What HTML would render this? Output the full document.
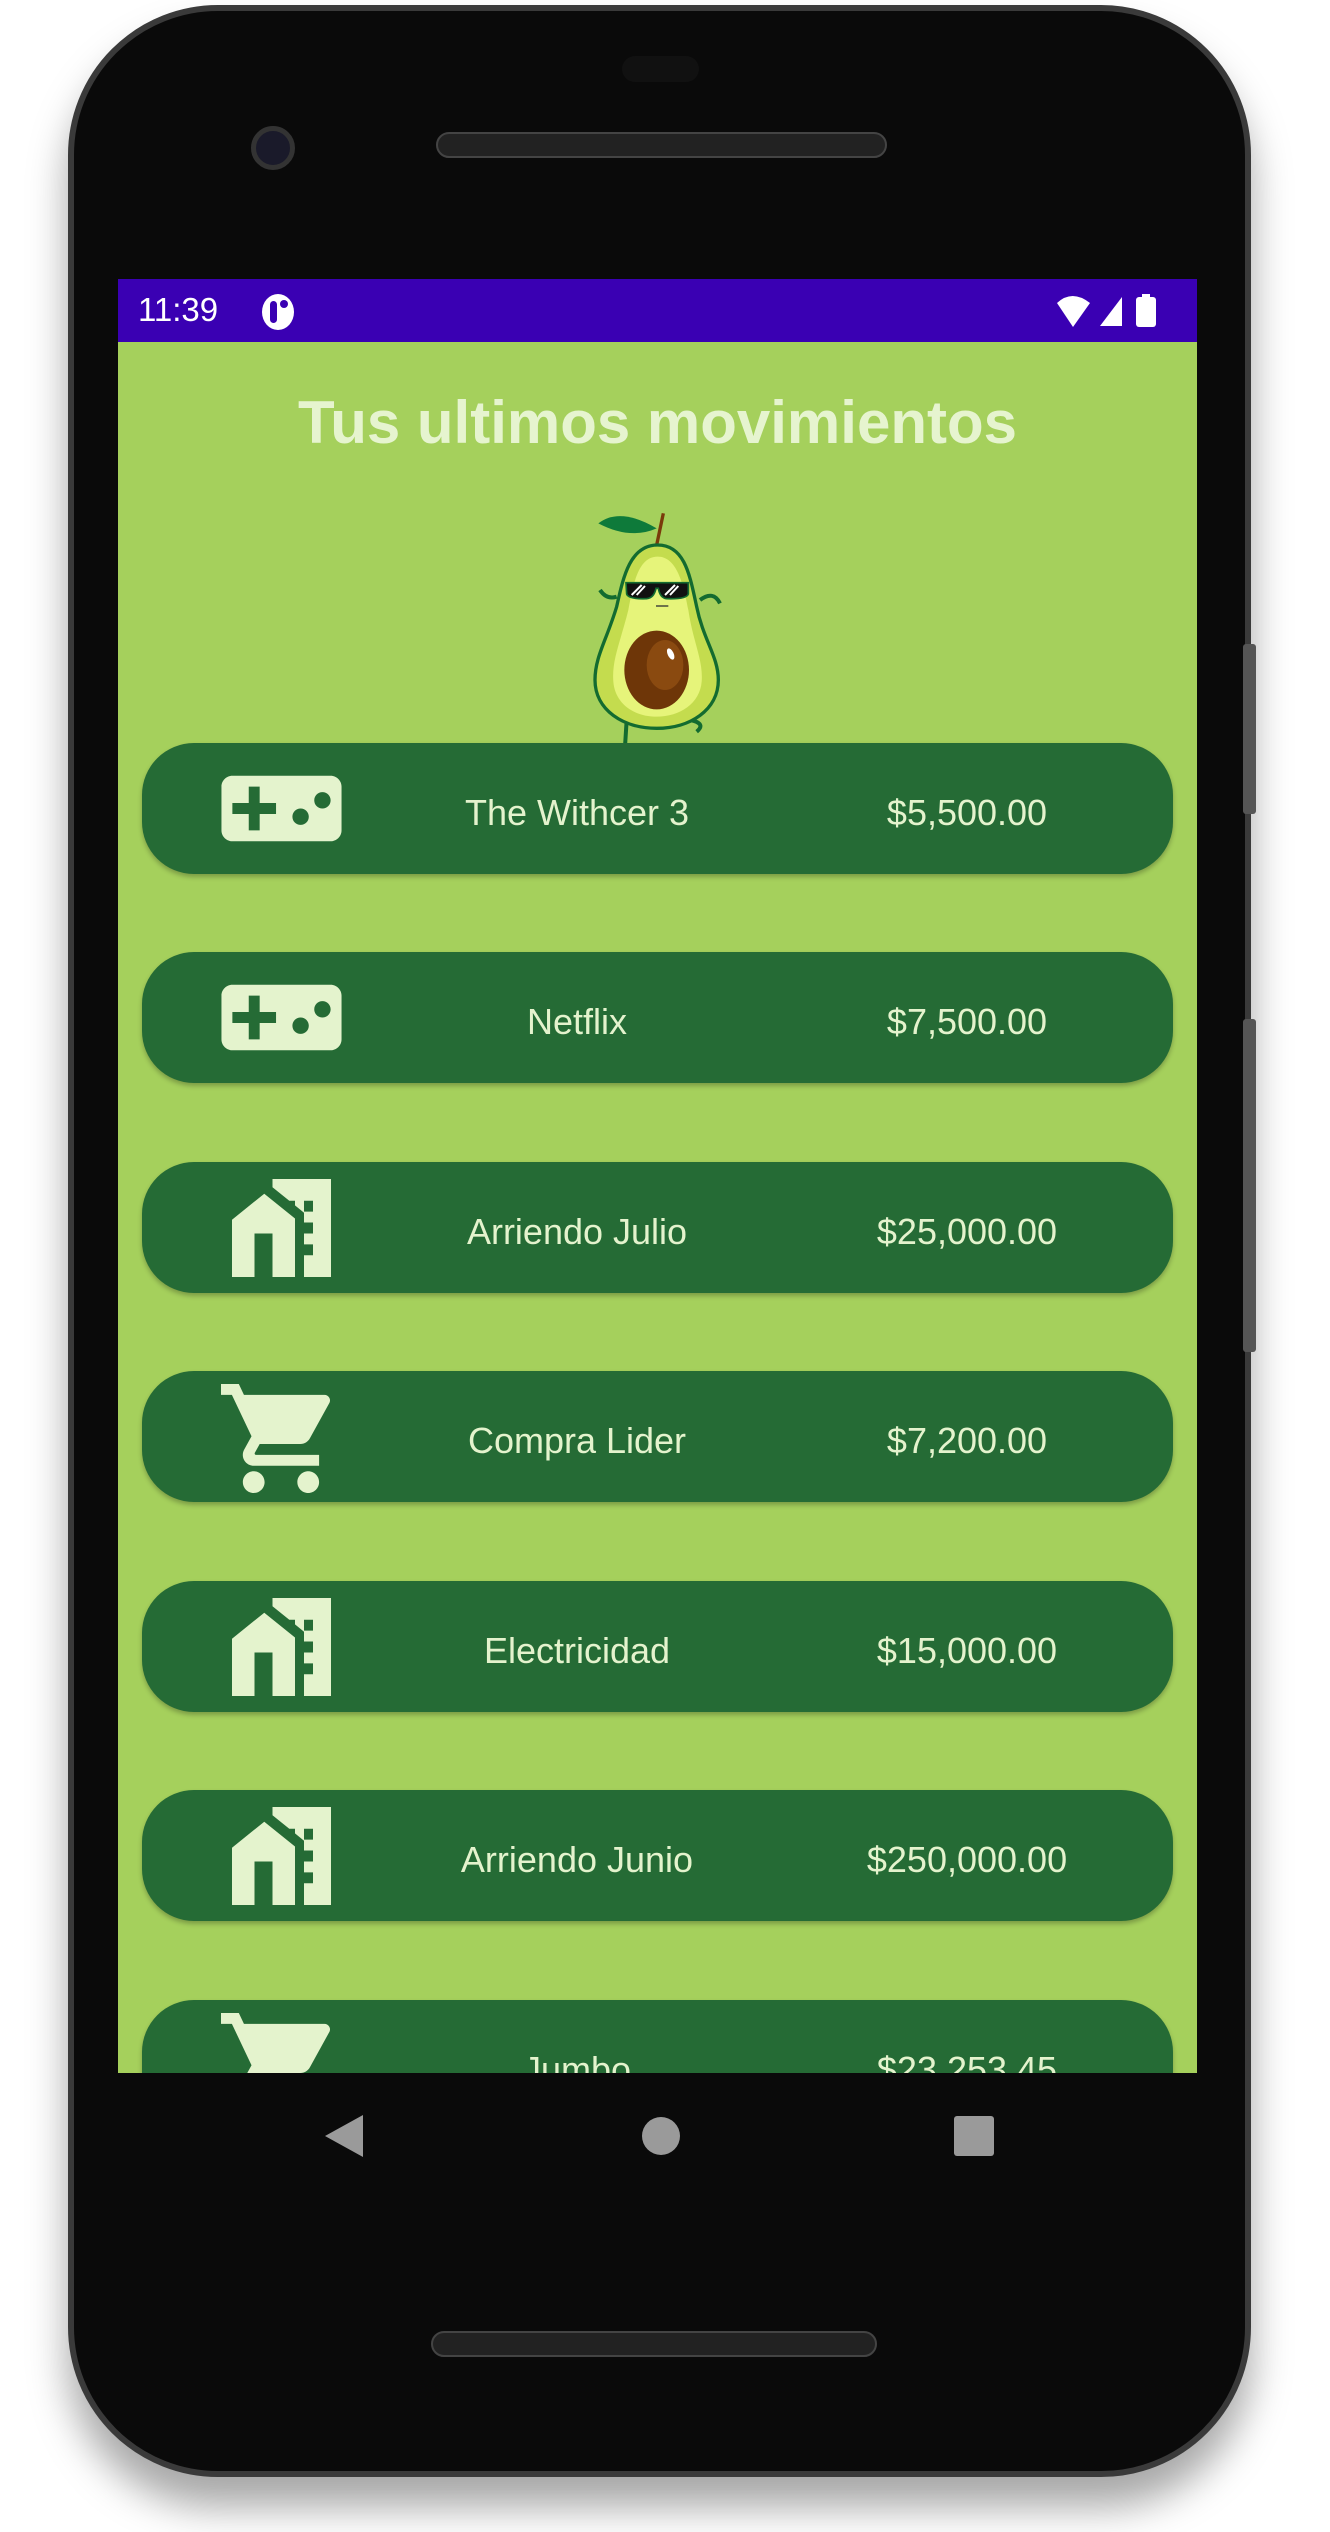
<!DOCTYPE html>
<html><head><meta charset="utf-8"><style>
*{margin:0;padding:0;box-sizing:border-box}
body{width:1330px;height:2532px;background:#fff;position:relative;overflow:hidden;font-family:"Liberation Sans",sans-serif}
.abs{position:absolute}
.phone{left:68px;top:5px;width:1183px;height:2472px;border-radius:150px;background:#0a0a0a;border:6px solid #3a3a3a;box-shadow:0 30px 40px rgba(0,0,0,.35)}
.screen{left:118px;top:279px;width:1079px;height:1794px;background:#a5d05c;overflow:hidden}
.status{left:0;top:0;width:1079px;height:63px;background:#3a00b3;color:#fff}
.card{left:24px;width:1031px;height:131px;border-radius:52px;background:#256b35;box-shadow:0 3px 5px rgba(0,0,0,.25)}
.lbl{position:absolute;top:4px;height:131px;line-height:131px;font-size:36px;color:#e4f3cd;text-align:center;width:340px}
.l1{left:265px}.l2{left:655px}
.ic{position:absolute}
</style></head><body>
<div class="abs phone"></div>
<div class="abs" style="left:1243px;top:644px;width:13px;height:170px;background:#555;border-radius:3px"></div>
<div class="abs" style="left:1243px;top:1019px;width:13px;height:333px;background:#555;border-radius:3px"></div>
<div class="abs" style="left:622px;top:56px;width:77px;height:26px;background:#111;border-radius:13px"></div>
<div class="abs" style="left:436px;top:132px;width:451px;height:26px;background:#222;border:2px solid #444;border-radius:13px"></div>
<div class="abs" style="left:251px;top:126px;width:44px;height:44px;background:#1a1a2a;border-radius:50%;border:5px solid #333"></div>
<div class="abs" style="left:431px;top:2331px;width:446px;height:26px;background:#222;border:2px solid #444;border-radius:13px"></div>
<svg class="abs" style="left:325px;top:2115px" width="38" height="42"><path d="M38 0V42L0 21Z" fill="#9a9a9a"/></svg>
<div class="abs" style="left:642px;top:2117px;width:38px;height:38px;border-radius:50%;background:#9a9a9a"></div>
<div class="abs" style="left:954px;top:2116px;width:40px;height:40px;border-radius:3px;background:#9a9a9a"></div>

<div class="abs screen">
 <div class="abs status">
  <div class="abs" style="left:20px;top:10px;font-size:33px;line-height:42px">11:39</div>
  <div class="abs" style="left:144px;top:15px;width:32px;height:36px;border-radius:50%;background:#fff"></div>
  <div class="abs" style="left:152px;top:22px;width:7px;height:22px;border-radius:4px;background:#3a00b3"></div>
  <div class="abs" style="left:162px;top:21px;width:8px;height:8px;border-radius:50%;background:#3a00b3"></div>
  <svg class="abs" style="left:936px;top:14px" width="130" height="36"><path d="M3 10Q18 -4 36 10L19 34Z" fill="#fff"/><path d="M68 4V33H46Z" fill="#fff"/><rect x="82" y="4" width="20" height="30" rx="3" fill="#fff"/><rect x="88" y="1" width="8" height="4" fill="#fff"/></svg>
 </div>
 <div class="abs" style="left:0;width:1079px;top:109px;text-align:center;font-size:60px;font-weight:bold;color:#e6f4cf;line-height:70px">Tus ultimos movimientos</div>
 <svg class="abs" style="left:462px;top:221px" width="160" height="250" viewBox="0 0 480 750">
  <path d="M230 135 L250 40" stroke="#7a3a0a" stroke-width="10"/>
  <path d="M55 70 Q120 20 230 85 Q150 120 55 70Z" fill="#0e7a3a"/>
  <path d="M60 270 Q80 300 110 290" stroke="#136b30" stroke-width="12" fill="none"/>
  <path d="M360 300 Q400 270 420 310" stroke="#136b30" stroke-width="12" fill="none"/>
  <path d="M140 660 L135 740 M330 660 Q380 670 350 695" stroke="#136b30" stroke-width="12" fill="none"/>
  <path d="M233 135 C150 135 130 230 110 320 C80 420 45 470 45 540 C45 630 130 685 230 685 C330 685 415 630 415 540 C415 470 370 420 350 320 C330 230 316 135 233 135Z" fill="#c4dc4e" stroke="#136b30" stroke-width="10"/>
  <path d="M233 170 C175 170 160 250 145 330 C120 430 95 480 100 545 C105 610 160 650 230 650 C300 650 360 610 365 545 C370 480 340 430 325 330 C310 250 290 170 233 170Z" fill="#e6f47a"/>
  <ellipse cx="230" cy="510" rx="97" ry="118" fill="#6e3608"/>
  <ellipse cx="255" cy="495" rx="55" ry="75" fill="#8a4a10"/>
  <ellipse cx="272" cy="462" rx="9" ry="18" fill="#fff" transform="rotate(-25 272 462)"/>
  <path d="M138 248H325V282Q320 298 260 296Q240 294 235 265H228Q222 294 200 296Q145 298 140 282Z" fill="#111" stroke="#136b30" stroke-width="5"/>
  <path d="M155 285L185 255M170 285L195 258M255 285L285 255M270 285L295 258" stroke="#fff" stroke-width="6"/>
  <path d="M228 318H265" stroke="#333" stroke-width="4"/>
 </svg>

 <div class="abs card" style="top:464px">
  <svg class="ic" style="left:74px;top:0" width="131" height="131" viewBox="0 0 24 24"><path fill="#e4f3cd" d="M21 6H3c-1.1 0-2 .9-2 2v8c0 1.1.9 2 2 2h18c1.1 0 2-.9 2-2V8c0-1.1-.9-2-2-2zm-10 7H8v3H6v-3H3v-2h3V8h2v3h3v2zm4.5 2c-.83 0-1.5-.67-1.5-1.5s.67-1.5 1.5-1.5 1.5.67 1.5 1.5-.67 1.5-1.5 1.5zm4-3c-.83 0-1.5-.67-1.5-1.5S18.67 9 19.5 9s1.5.67 1.5 1.5-.67 1.5-1.5 1.5z"/></svg>
  <div class="lbl l1">The Withcer 3</div><div class="lbl l2">$5,500.00</div></div>
 <div class="abs card" style="top:673px">
  <svg class="ic" style="left:74px;top:0" width="131" height="131" viewBox="0 0 24 24"><path fill="#e4f3cd" d="M21 6H3c-1.1 0-2 .9-2 2v8c0 1.1.9 2 2 2h18c1.1 0 2-.9 2-2V8c0-1.1-.9-2-2-2zm-10 7H8v3H6v-3H3v-2h3V8h2v3h3v2zm4.5 2c-.83 0-1.5-.67-1.5-1.5s.67-1.5 1.5-1.5 1.5.67 1.5 1.5-.67 1.5-1.5 1.5zm4-3c-.83 0-1.5-.67-1.5-1.5S18.67 9 19.5 9s1.5.67 1.5 1.5-.67 1.5-1.5 1.5z"/></svg>
  <div class="lbl l1">Netflix</div><div class="lbl l2">$7,500.00</div></div>
 <div class="abs card" style="top:883px">
  <svg class="ic" style="left:90px;top:17px" width="99" height="98" viewBox="1 3 22 18" preserveAspectRatio="none"><path fill="#e4f3cd" d="M8.17 5.7L1 10.48V21h5v-8h4v8h5V10.25z M10 3v1.51l2 1.33L13.73 7H15v.85l2 1.34V11h2v2h-2v2h2v2h-2v4h6V3H10zm9 6h-2V7h2v2z"/></svg>
  <div class="lbl l1">Arriendo Julio</div><div class="lbl l2">$25,000.00</div></div>
 <div class="abs card" style="top:1092px">
  <svg class="ic" style="left:79px;top:13px" width="109" height="109" viewBox="1 2 20 20"><path fill="#e4f3cd" d="M7 18c-1.1 0-1.99.9-1.99 2S5.9 22 7 22s2-.9 2-2-.9-2-2-2zM1 2v2h2l3.6 7.59-1.35 2.45c-.16.28-.25.61-.25.96 0 1.1.9 2 2 2h12v-2H7.42c-.14 0-.25-.11-.25-.25l.03-.12.9-1.63h7.45c.75 0 1.41-.41 1.75-1.03l3.58-6.49A1.003 1.003 0 0020 4H5.21l-.94-2H1zm16 16c-1.1 0-1.99.9-1.99 2s.89 2 1.99 2 2-.9 2-2-.9-2-2-2z"/></svg>
  <div class="lbl l1">Compra Lider</div><div class="lbl l2">$7,200.00</div></div>
 <div class="abs card" style="top:1302px">
  <svg class="ic" style="left:90px;top:17px" width="99" height="98" viewBox="1 3 22 18" preserveAspectRatio="none"><path fill="#e4f3cd" d="M8.17 5.7L1 10.48V21h5v-8h4v8h5V10.25z M10 3v1.51l2 1.33L13.73 7H15v.85l2 1.34V11h2v2h-2v2h2v2h-2v4h6V3H10zm9 6h-2V7h2v2z"/></svg>
  <div class="lbl l1">Electricidad</div><div class="lbl l2">$15,000.00</div></div>
 <div class="abs card" style="top:1511px">
  <svg class="ic" style="left:90px;top:17px" width="99" height="98" viewBox="1 3 22 18" preserveAspectRatio="none"><path fill="#e4f3cd" d="M8.17 5.7L1 10.48V21h5v-8h4v8h5V10.25z M10 3v1.51l2 1.33L13.73 7H15v.85l2 1.34V11h2v2h-2v2h2v2h-2v4h6V3H10zm9 6h-2V7h2v2z"/></svg>
  <div class="lbl l1">Arriendo Junio</div><div class="lbl l2">$250,000.00</div></div>
 <div class="abs card" style="top:1721px">
  <svg class="ic" style="left:79px;top:13px" width="109" height="109" viewBox="1 2 20 20"><path fill="#e4f3cd" d="M7 18c-1.1 0-1.99.9-1.99 2S5.9 22 7 22s2-.9 2-2-.9-2-2-2zM1 2v2h2l3.6 7.59-1.35 2.45c-.16.28-.25.61-.25.96 0 1.1.9 2 2 2h12v-2H7.42c-.14 0-.25-.11-.25-.25l.03-.12.9-1.63h7.45c.75 0 1.41-.41 1.75-1.03l3.58-6.49A1.003 1.003 0 0020 4H5.21l-.94-2H1zm16 16c-1.1 0-1.99.9-1.99 2s.89 2 1.99 2 2-.9 2-2-.9-2-2-2z"/></svg>
  <div class="lbl l1">Jumbo</div><div class="lbl l2">$23,253.45</div></div>
</div>
</body></html>
